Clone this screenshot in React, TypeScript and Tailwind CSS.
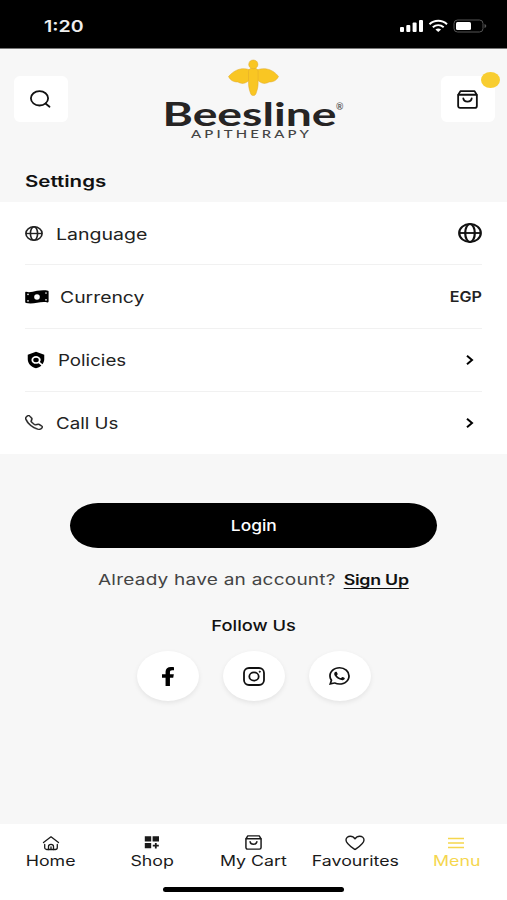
import type { ReactNode } from "react";
import { FaFacebookF } from "react-icons/fa";
import { MdPolicy } from "react-icons/md";
import { BsTelephone, BsWhatsapp } from "react-icons/bs";

const GlobeIcon = ({ className }: { className: string }) => (
  <svg viewBox="0 0 24 24" preserveAspectRatio="none" fill="none" stroke="currentColor" strokeWidth="2.2" className={className}>
    <circle cx="12" cy="12" r="10.8" />
    <ellipse cx="12" cy="12" rx="4.8" ry="10.8" />
    <path d="M1.2 12h21.6" />
  </svg>
);

const CashIcon = () => (
  <svg viewBox="0 0 24 14" className="w-6 h-3.5 text-black">
    <path
      d="M1 1.8C5 3 8 1.4 12 .8s8-.8 11 0c.5.1.6.4.6.8v10c0 .6-.4.9-1 .8-3.5-.7-7-.3-10.5.4s-8 1-11.1.2c-.6-.1-.8-.4-.8-.9V2.5c0-.5.3-.8.8-.7Z"
      fill="currentColor"
    />
    <circle cx="12" cy="7" r="2.8" fill="#fff" />
    <g stroke="#fff" strokeWidth="1.6" strokeLinecap="round">
      <path d="M3 4.4v.1M3 10.8v.1M21 3v.1M21 9.8v.1" />
    </g>
  </svg>
);

const BagIcon = ({ className }: { className: string }) => (
  <svg viewBox="0 0 22 20" preserveAspectRatio="none" fill="none" stroke="currentColor" strokeWidth="1.9" strokeLinejoin="round" strokeLinecap="round" className={className}>
    <path d="M1.2 5.2 3.6 1.2h14.8l2.4 4v11.6a2 2 0 0 1-2 2H3.2a2 2 0 0 1-2-2Z" />
    <path d="M1.5 5h19" />
    <path d="M6.6 8.8c.6 4.6 8.2 4.6 8.8 0" />
  </svg>
);

const HomeIcon = () => (
  <svg viewBox="0 0 18 16" fill="none" stroke="currentColor" strokeWidth="1.3" strokeLinecap="round" strokeLinejoin="round" className="w-[18px] h-4">
    <path d="M1.5 7.5 9 1.8l7.5 5.700" />
    <path d="M2.7 9.5v3a2 2 0 0 0 2 2h1.8V11.5a2.500 2.200 0 0 1 5 0v3h1.800a2 2 0 0 0 2-2v-3" />
    <path d="M9 11.8v2.7M6.5 14.5h5" />
  </svg>
);

const ShopIcon = () => (
  <svg viewBox="0 0 16 13" className="w-4 h-[13px]">
    <path d="M.8.3h6.4v5.3H.8zM8.600.3H15v5.3H8.600zM.8 7h6.4v5.3H.8z" fill="currentColor" />
    <path d="M11.8 7v5.5M8.8 9.7h6" stroke="currentColor" strokeWidth="1.8" />
  </svg>
);

const HeartIcon = () => (
  <svg viewBox="0 0 20 16" fill="none" stroke="currentColor" strokeWidth="1.4" strokeLinejoin="round" className="w-5 h-4">
    <path d="M10 14.5C6 11.8 1 8.8 1 5c0-2.300 2-3.800 4.300-3.800 2 0 3.700 1 4.700 2.600 1-1.600 2.700-2.600 4.700-2.600C17 1.200 19 2.700 19 5c0 3.800-5 6.800-9 9.500Z" />
  </svg>
);

const MenuIcon = () => (
  <svg viewBox="0 0 16 12" stroke="currentColor" strokeWidth="1.5" className="w-4 h-3">
    <path d="M0 1.5h16M0 6h16M0 10.5h16" />
  </svg>
);

const InstagramIcon = () => (
  <svg viewBox="0 0 22 19" fill="none" stroke="currentColor" strokeWidth="1.8" className="w-[22px] h-[19px]">
    <rect x="1" y="1" width="20" height="17" rx="5" />
    <ellipse cx="11" cy="9.5" rx="4.7" ry="4.1" />
    <circle cx="16.8" cy="4.7" r=".6" fill="currentColor" strokeWidth="1" />
  </svg>
);

const ChevronIcon = () => (
  <svg viewBox="0 0 8 10" fill="none" stroke="currentColor" strokeWidth="2" className="w-2 h-2.5 mr-2 text-black">
    <path d="m1 .8 5 4.200-5 4.200" />
  </svg>
);

const StatusBar = () => (
  <div className="h-12 bg-black text-white flex items-center justify-between pl-[44px] pr-[20px] pt-[3px] shrink-0">
    <span className="inline-block origin-left scale-x-[1.22] text-base font-semibold text-[#eee]">1:20</span>
    <svg viewBox="0 0 87 14" className="w-[87px] h-3.5">
      <g fill="#fff">
        <rect x="0" y="8" width="4" height="5" rx="1" />
        <rect x="6.3" y="6" width="4" height="7" rx="1" />
        <rect x="12.6" y="3.5" width="4" height="9.5" rx="1" />
        <rect x="19" y="1" width="4" height="12" rx="1" />
      </g>
      <g fill="none" stroke="#fff" strokeWidth="2">
        <path d="M29.5 5.200c5-4.600 12.500-4.600 17.500 0" />
        <path d="M32.800 8.200c3.200-2.700 7.700-2.700 10.900 0" />
      </g>
      <path d="m38.250 13-2.800-2.600c1.600-1.300 4-1.300 5.600 0Z" fill="#fff" />
      <rect x="54" y="1" width="29" height="12" rx="3.5" fill="none" stroke="#555" />
      <rect x="56" y="3" width="15" height="8" rx="1.5" fill="#fff" />
      <path d="M84.5 5v4q1.800-.5 1.800-2t-1.800-2Z" fill="#555" />
    </svg>
  </div>
);

const Logo = () => (
  <svg viewBox="-4 0 190 84" className="w-[190px] h-[84px] mt-[10px]">
    <g fill="#f9c623" stroke="#dfa92c" strokeWidth=".5">
      <path d="M86 11C79 8 71 10 64.5 17.500c2 4 5 5.500 9.500 5.500 5 3 9 1 13.500-4ZM93 11c7-3 16-1 21.500 6.500-2 4-5 5.500-9.500 5.500-5 3-9 1-13.500-4Z" />
      <path d="M84.5 12.500c0-2.500 2-3.500 4.800-3.500s4.800 1 4.800 3.500v12c0 4-1.200 7.500-2.300 10.500-1 2-4 2-5 0-1.100-3-2.300-6.500-2.300-10.500Z" />
      <ellipse cx="89.3" cy="5.4" rx="4.6" ry="4.4" />
    </g>
    <text x="-1.5" y="67" textLength="174" lengthAdjust="spacingAndGlyphs" className="font-['Lato'] font-bold text-[33px]" fill="#262424">Beesline</text>
    <text x="172" y="51" className="font-['Lato'] font-bold text-[9px]" fill="#666">®</text>
    <text x="27" y="78.5" textLength="121" lengthAdjust="spacingAndGlyphs" className="font-['Lato'] font-medium text-[10.5px] tracking-[2.2px]" fill="#444">APITHERAPY</text>
  </svg>
);

const Header = () => (
  <header className="h-[108px] flex items-start justify-between pl-3.5 pr-3">
    <button className="w-[54px] h-[46px] mt-[27px] rounded-md bg-white flex items-center justify-center">
      <svg viewBox="0 0 22 18" fill="none" stroke="currentColor" strokeWidth="1.8" strokeLinecap="round" className="w-[22px] h-[18px] mr-[3px]">
        <ellipse cx="10.5" cy="8.3" rx="8.6" ry="7.2" />
        <path d="m16.5 13.500 4 3.200" />
      </svg>
    </button>
    <Logo />
    <button className="relative w-[54px] h-[46px] mt-[27px] rounded-md bg-white flex items-center justify-center">
      <BagIcon className="w-[21px] h-[19px] mr-0.5" />
      <span className="absolute -top-1 left-10 w-[19px] h-4 rounded-[50%] bg-[#f8cd30]" />
    </button>
  </header>
);

const SettingsRow = ({ icon, children, action }: { icon: ReactNode; children: ReactNode; action: ReactNode }) => (
  <div className="flex items-center flex-1 border-b border-[#f1f1f1] last:border-0">
    {icon}
    {children}
    <div className="ml-auto flex items-center">{action}</div>
  </div>
);

const SocialButton = ({ children }: { children: ReactNode }) => (
  <button className="w-[62px] h-[50px] rounded-[50%] bg-white shadow-[0_2px_5px_rgba(0,0,0,0.08)] flex items-center justify-center text-[#111]">
    {children}
  </button>
);

const NavItem = ({ icon, label, active }: { icon: ReactNode; label: string; active?: boolean }) => (
  <a className={`flex flex-1 flex-col items-center ${active ? "text-[#f5d64e]" : "text-[#1a1a1a]"}`}>
    <span className="h-[17px] flex items-center">{icon}</span>
    <span className="text-sm leading-5 whitespace-nowrap scale-x-[1.27]">{label}</span>
  </a>
);

const App = () => {
  return (
    <div className="w-full h-[900px] flex flex-col bg-[#f7f7f7] text-[#111] font-['Inter',sans-serif] overflow-hidden">
      <StatusBar />
      <div className="h-px bg-[#777] shrink-0" />
      <Header />

      <main className="flex-1 flex flex-col items-center">
        <h1 className="w-full h-[45px] pl-[25px] pt-3 text-base leading-6 font-semibold">
          <span className="inline-block origin-left scale-x-[1.28]">Settings</span>
        </h1>

        <section className="w-full h-[252px] px-[25px] bg-white flex flex-col text-[#222]">
          <SettingsRow icon={<GlobeIcon className="w-[18px] h-[15px] mr-[13px]" />} action={<GlobeIcon className="w-6 h-5 text-[#111]" />}>
            <span className="pt-0.5 origin-left scale-x-[1.22]">Language</span>
          </SettingsRow>
          <SettingsRow icon={<span className="mr-[11px] pt-0.5"><CashIcon /></span>} action={<span className="pt-0.5 origin-right scale-x-[1.15] text-sm font-semibold">EGP</span>}>
            <span className="pt-0.5 origin-left scale-x-[1.21]">Currency</span>
          </SettingsRow>
          <SettingsRow icon={<MdPolicy preserveAspectRatio="none" className="w-[22px] h-[18px] mr-[11px] text-black" />} action={<ChevronIcon />}>
            <span className="origin-left scale-x-[1.17]">Policies</span>
          </SettingsRow>
          <SettingsRow icon={<BsTelephone preserveAspectRatio="none" strokeWidth={0.4} className="w-[18px] h-[15px] mr-[13px]" />} action={<ChevronIcon />}>
            <span className="origin-left scale-x-[1.17]">Call Us</span>
          </SettingsRow>
        </section>

        <button className="w-[367px] h-[45px] mt-[49px] pt-px rounded-[28px/22.5px] bg-black text-white text-[15px] font-medium">
          <span className="inline-block scale-x-[1.16]">Login</span>
        </button>

        <p className="mt-5 text-[15px] leading-6 text-[#444] whitespace-nowrap scale-x-[1.27]">
          <span className="tracking-[0.17px]">Already have an account?</span>{" "}
          <a className="ml-0.5 text-sm font-semibold tracking-[-0.2px] text-[#111] underline underline-offset-[3px]">Sign Up</a>
        </p>

        <h2 className="mt-[22px] text-[15px] leading-6 font-medium scale-x-[1.22]">Follow Us</h2>

        <div className="mt-[13px] flex gap-6">
          <SocialButton>
            <FaFacebookF preserveAspectRatio="none" className="w-3.5 h-[19px] text-black" />
          </SocialButton>
          <SocialButton>
            <InstagramIcon />
          </SocialButton>
          <SocialButton>
            <BsWhatsapp preserveAspectRatio="none" className="w-[21px] h-[18px]" />
          </SocialButton>
        </div>
      </main>

      <footer className="h-[76px] bg-white shrink-0 flex flex-col items-center">
        <nav className="w-full flex pt-2.5">
          <NavItem icon={<HomeIcon />} label="Home" />
          <NavItem icon={<ShopIcon />} label="Shop" />
          <NavItem icon={<BagIcon className="w-[17px] h-[15px]" />} label="My Cart" />
          <NavItem icon={<HeartIcon />} label="Favourites" />
          <NavItem icon={<MenuIcon />} label="Menu" active />
        </nav>
        <div className="w-[181px] h-[5px] mt-4 rounded-full bg-black" />
      </footer>
    </div>
  );
};

export default App;
